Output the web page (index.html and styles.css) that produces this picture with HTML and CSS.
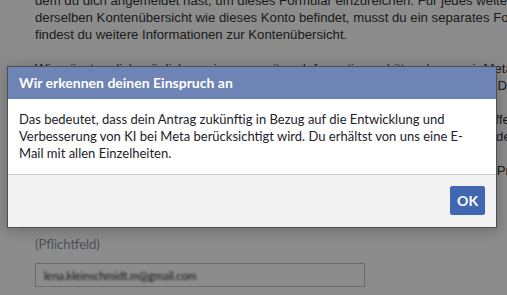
FILE: index.html
```html
<!DOCTYPE html>
<html lang="de">
<head>
<meta charset="utf-8">
<title>Einspruch</title>
<link rel="stylesheet" href="styles.css">
</head>
<body>
<main class="page">
  <p class="para">
    <span class="line">dem du dich angemeldet hast, um dieses Formular einzureichen. Für jedes weitere Konto, das sich in</span>
    <span class="line">derselben Kontenübersicht wie dieses Konto befindet, musst du ein separates Formular einreichen. Hier</span>
    <span class="line">findest du weitere Informationen zur Kontenübersicht.</span>
  </p>
  <p class="para">
    <span class="line">Wir müssten dich möglicherweise um weitere Informationen bitten, bevor wir Metas KI-Modelle</span>
    <span class="line">anpassen können. Wir prüfen jeden Einspruch anhand der geltenden Gesetze. Du erhältst eine Antwort.</span>
  </p>
  <p class="para">
    <span class="line">Nach der Prüfung verwenden wir deine Informationen nicht mehr für KI. Auch öffentliche Inhalte</span>
    <span class="line">Beiträge werden ausgeschlossen, sofern sie mit deinem Konto gekoppelt sind, deren Inhalte betreffend.</span>
  </p>
  <p class="para">
    <span class="line">Gib bitte die E-Mail-Adresse an, die mit deinem Konto verknüpft ist, sodass wir Probleme klären können.</span>
  </p>
  <div class="field">
    <label class="label" for="email">E-Mail-Adresse</label>
    <div class="hint">(Pflichtfeld)</div>
    <div class="input" id="email"><span class="blurred">lena.kleinschmidt.m@gmail.com</span></div>
  </div>
</main>
<div class="overlay"></div>
<section class="dialog" role="dialog" aria-labelledby="dlg-title">
  <header class="dialog-header" id="dlg-title">Wir erkennen deinen Einspruch an</header>
  <div class="dialog-body">Das bedeutet, dass dein Antrag zukünftig in Bezug auf die Entwicklung und<br>Verbesserung von KI bei Meta berücksichtigt wird. Du erhältst von uns eine E-<br>Mail mit allen Einzelheiten.</div>
  <footer class="dialog-footer"><button class="btn" type="button">OK</button></footer>
</section>
</body>
</html>
```

FILE: styles.css
```css
* { box-sizing: border-box; }
html, body { margin: 0; padding: 0; }
body {
  width: 507px;
  height: 295px;
  overflow: hidden;
  position: relative;
  background: #ffffff;
  color: #333333;
  font-family: Arial, "Liberation Sans", sans-serif;
}
.page {
  width: 900px;
  margin-top: -8px;
  padding-left: 35px;
  font-size: 13.2px;
  line-height: 17px;
}
.para { margin: 0 0 17px; }
.line { display: block; white-space: nowrap; }
.field { margin-top: 17px; font-family: Lato, "Open Sans", sans-serif; }
.label { display: block; font-size: 13px; line-height: 17px; font-weight: 700; color: #4b4f56; }
.hint { margin-top: 23px; font-size: 13px; line-height: 17px; color: #90949c; }
.input {
  margin-top: 10px;
  width: 330px;
  height: 24px;
  border: 1px solid #c4c4c4;
  background: #ffffff;
  padding: 0 8px;
  display: flex;
  align-items: center;
}
.blurred {
  font-size: 11px;
  color: #1e1e1e;
  filter: blur(0.8px);
}
.overlay {
  position: absolute;
  inset: 0;
  background: rgba(0, 0, 0, 0.45);
}
.dialog {
  position: absolute;
  left: 7px;
  top: 66px;
  width: 490px;
  border: 1px solid rgba(35, 35, 35, 0.8);
  background: #ffffff;
  box-shadow: 0 2px 14px rgba(0, 0, 0, 0.25);
  font-family: Lato, "Open Sans", sans-serif;
}
.dialog-header {
  height: 32px;
  line-height: 32px;
  padding: 0 11px;
  background: #6d84b4;
  color: #ffffff;
  font-size: 14px;
  font-weight: 700;
}
.dialog-body {
  padding: 12px 11px;
  font-size: 13px;
  line-height: 17px;
  color: #1d2129;
  white-space: nowrap;
}
.dialog-footer {
  display: flex;
  justify-content: flex-end;
  padding: 11px 11px 12px;
  background: #f2f2f2;
  border-top: 1px solid #cccccc;
}
.btn {
  height: 29px;
  padding: 0 6px;
  background: #4267b2;
  border: 1px solid #4267b2;
  border-radius: 2px;
  color: #ffffff;
  font-family: Lato, "Open Sans", sans-serif;
  font-size: 14px;
  font-weight: 700;
}
```
